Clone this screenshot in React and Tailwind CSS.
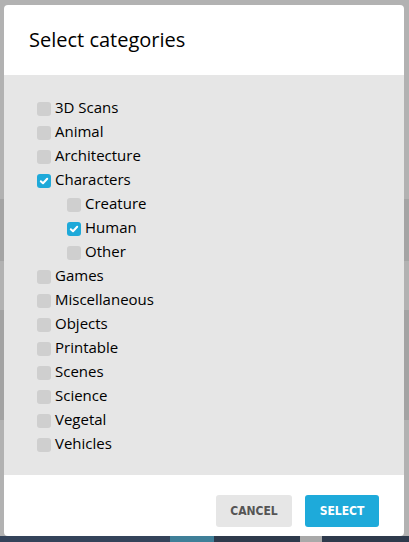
import React from "react";

const items = [
  { label: "3D Scans" },
  { label: "Animal" },
  { label: "Architecture" },
  { label: "Characters", checked: true },
  { label: "Creature", nested: true },
  { label: "Human", nested: true, checked: true },
  { label: "Other", nested: true },
  { label: "Games" },
  { label: "Miscellaneous" },
  { label: "Objects" },
  { label: "Printable" },
  { label: "Scenes" },
  { label: "Science" },
  { label: "Vegetal" },
  { label: "Vehicles" },
];

function Box({ checked }) {
  if (checked) {
    return (
      <span className="w-[14px] h-[14px] rounded-[3px] bg-[#1ea9d9] flex items-center justify-center shrink-0">
        <svg width="10" height="10" viewBox="0 0 10 10">
          <path d="M1.8 5.2 L4 7.3 L8.2 2.8" fill="none" stroke="#fff" strokeWidth="2" strokeLinecap="round" strokeLinejoin="round" />
        </svg>
      </span>
    );
  }
  return <span className="w-[14px] h-[14px] rounded-[3px] bg-[#cfcfcf] shrink-0" />;
}

function Strip() {
  return (
    <div className="w-full h-full flex flex-col">
      <div className="h-[199px] bg-[#b2b2b2]" />
      <div className="h-[62px] bg-[#a4a4a4]" />
      <div className="h-[49px] bg-[#b2b2b2]" />
      <div className="h-[110px] bg-[#a3a3a3]" />
      <div className="flex-1 bg-[#b2b2b2]" />
    </div>
  );
}

export default function App() {
  return (
    <div className="w-[409px] h-[542px] overflow-hidden flex flex-col bg-[#b2b2b2]" style={{ fontFamily: '"Open Sans", "Noto Sans", sans-serif' }}>
      <div className="h-[536px] flex">
        <div className="w-[4px] h-full"><Strip /></div>
        <div className="w-[400px] mt-[5px] h-[531px] bg-white rounded-[4px] flex flex-col overflow-hidden">
          <div className="h-[70px] flex items-center pl-[25px] pb-[1px]">
            <h1 className="text-[20px] leading-none text-[#000] font-normal">Select categories</h1>
          </div>
          <div className="h-[400px] bg-[#e6e6e6] pt-[22px] pl-[33px]">
            {items.map((it) => (
              <div key={it.label} className={`h-[24px] flex items-center gap-[4px] ${it.nested ? "pl-[30px]" : ""}`}>
                <Box checked={it.checked} />
                <span className="text-[15px] text-[#000] leading-none -mt-[4px]">{it.label}</span>
              </div>
            ))}
          </div>
          <div className="flex-1 flex justify-end items-start pt-[20px] pr-[25px] gap-[13px]">
            <button className="w-[76px] h-[32px] rounded-[3px] bg-[#e6e6e6] text-[#555] text-[12px] font-bold" style={{ fontFamily: '"DejaVu Sans Condensed", "DejaVu Sans", sans-serif', fontStretch: "condensed" }}>CANCEL</button>
            <button className="w-[74px] h-[32px] rounded-[3px] bg-[#1eaada] text-white text-[12px] font-bold" style={{ fontFamily: '"DejaVu Sans Condensed", "DejaVu Sans", sans-serif', fontStretch: "condensed" }}>SELECT</button>
          </div>
        </div>
        <div className="w-[5px] h-full"><Strip /></div>
      </div>
      <div className="flex-1 flex bg-[#2e3a4c]">
        <div className="w-[170px] bg-[#34435a]" />
        <div className="w-[44px] bg-[#3f7f98]" />
        <div className="w-[86px]" />
        <div className="w-[22px] bg-[#a9a9a9]" />
        <div className="flex-1" />
      </div>
    </div>
  );
}
